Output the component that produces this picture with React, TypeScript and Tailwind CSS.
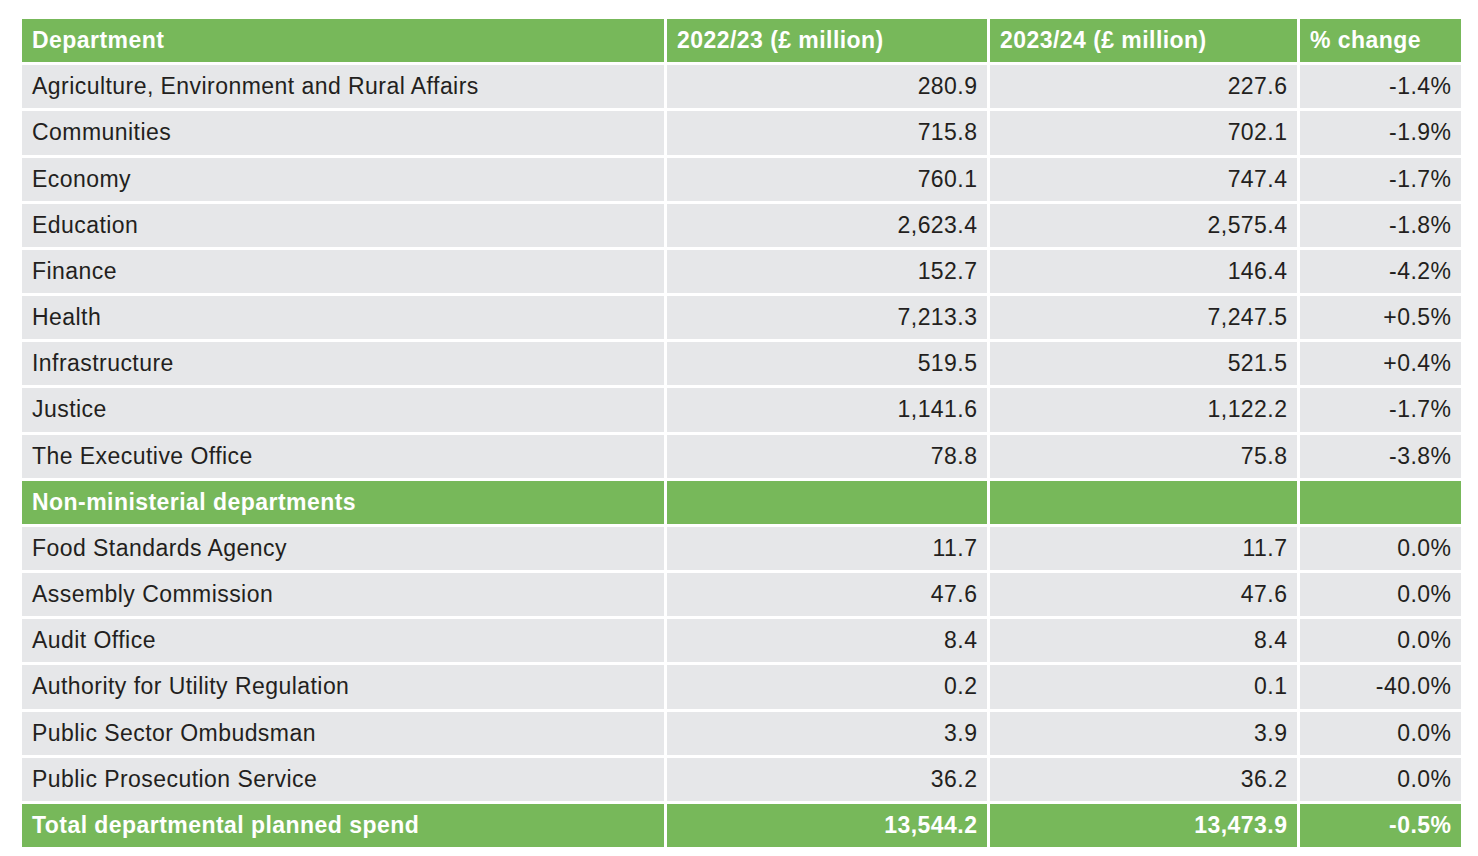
const rows: [string, string, string, string][] = [
  ["Agriculture, Environment and Rural Affairs", "280.9", "227.6", "-1.4%"],
  ["Communities", "715.8", "702.1", "-1.9%"],
  ["Economy", "760.1", "747.4", "-1.7%"],
  ["Education", "2,623.4", "2,575.4", "-1.8%"],
  ["Finance", "152.7", "146.4", "-4.2%"],
  ["Health", "7,213.3", "7,247.5", "+0.5%"],
  ["Infrastructure", "519.5", "521.5", "+0.4%"],
  ["Justice", "1,141.6", "1,122.2", "-1.7%"],
  ["The Executive Office", "78.8", "75.8", "-3.8%"],
];

const nonMinisterial: [string, string, string, string][] = [
  ["Food Standards Agency", "11.7", "11.7", "0.0%"],
  ["Assembly Commission", "47.6", "47.6", "0.0%"],
  ["Audit Office", "8.4", "8.4", "0.0%"],
  ["Authority for Utility Regulation", "0.2", "0.1", "-40.0%"],
  ["Public Sector Ombudsman", "3.9", "3.9", "0.0%"],
  ["Public Prosecution Service", "36.2", "36.2", "0.0%"],
];

function Cell({
  children,
  green,
  right,
}: {
  children?: React.ReactNode;
  green?: boolean;
  right?: boolean;
}) {
  return (
    <div
      className={
        "flex items-center whitespace-nowrap px-[10px] text-[23px] leading-none tracking-[0.45px] " +
        (green ? "bg-[#77b85a] font-bold text-white " : "bg-[#e6e7e9] text-[#231f20] ") +
        (right ? "justify-end" : "justify-start")
      }
    >
      {right ? <span className="-mr-[0.45px]">{children}</span> : children}
    </div>
  );
}

function DataRow({ row }: { row: [string, string, string, string] }) {
  return (
    <>
      <Cell>{row[0]}</Cell>
      <Cell right>{row[1]}</Cell>
      <Cell right>{row[2]}</Cell>
      <Cell right>{row[3]}</Cell>
    </>
  );
}

export default function App() {
  return (
    <div
      className="min-h-[856px] w-[1478px] bg-white pl-[22px] pt-[19px]"
      style={{ fontFamily: '"Liberation Sans", Arial, sans-serif' }}
    >
      <div className="grid h-[828px] w-[1439px] grid-cols-[642px_320px_307px_161px] grid-rows-[repeat(18,1fr)] gap-[3px]">
        <Cell green>Department</Cell>
        <Cell green>2022/23 (£ million)</Cell>
        <Cell green>2023/24 (£ million)</Cell>
        <Cell green>% change</Cell>

        {rows.map((r) => (
          <DataRow key={r[0]} row={r} />
        ))}

        <Cell green>Non-ministerial departments</Cell>
        <Cell green />
        <Cell green />
        <Cell green />

        {nonMinisterial.map((r) => (
          <DataRow key={r[0]} row={r} />
        ))}

        <Cell green>Total departmental planned spend</Cell>
        <Cell green right>13,544.2</Cell>
        <Cell green right>13,473.9</Cell>
        <Cell green right>-0.5%</Cell>
      </div>
    </div>
  );
}
